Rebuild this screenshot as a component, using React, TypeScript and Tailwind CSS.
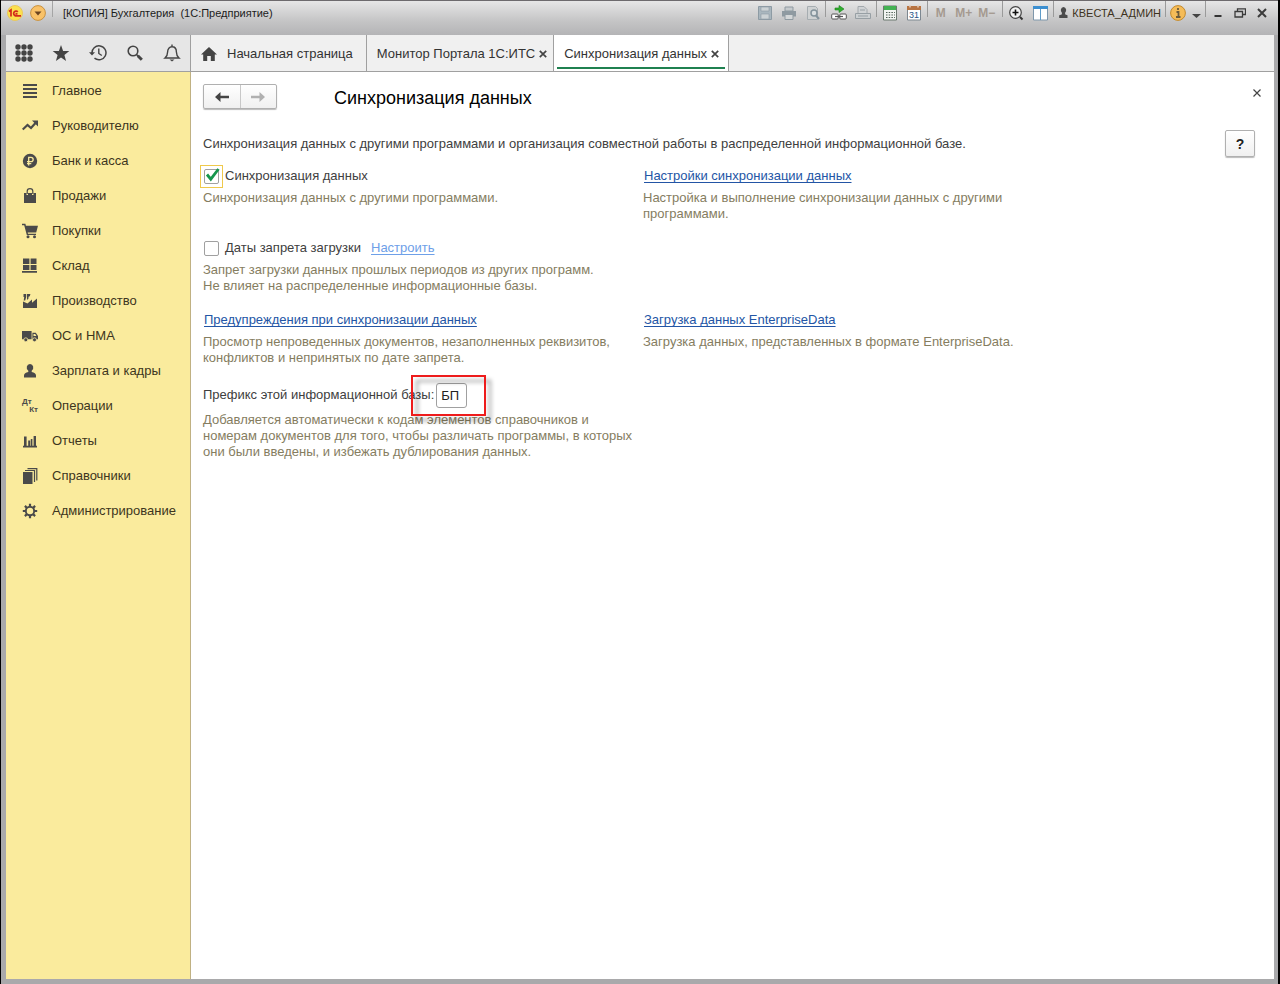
import React, { useState } from 'react';

type IconProps = { children: React.ReactNode; size?: number };

const Icon: React.FC<IconProps> = ({ children, size = 16 }) => (
  <svg width={size} height={size} viewBox="0 0 16 16" fill="currentColor" aria-hidden="true">
    {children}
  </svg>
);

const sections = [
  {
    title: 'Главное',
    icon: <path d="M1 1h14v2H1zM1 5h14v2H1zM1 9h14v2H1zM1 13h14v2H1z" />,
  },
  {
    title: 'Руководителю',
    icon: (
      <>
        <path d="M.7 11.500l4.800-4.500 3.500 3 4.500-5" fill="none" stroke="currentColor" strokeWidth="2.200" />
        <path d="M10 2.500h6v6z" />
      </>
    ),
  },
  {
    title: 'Банк и касса',
    icon: (
      <>
        <circle cx="8" cy="8" r="7.200" />
        <path d="M6.700 12.500V4.300h2.300a2.100 2.100 0 0 1 0 4.300H5M5 10.600h4.300" fill="none" stroke="#faeb9d" strokeWidth="1.300" />
      </>
    ),
  },
  {
    title: 'Продажи',
    icon: (
      <>
        <path d="M2 5h2.500v2h1.500V5h4v2h1.500V5H14v10H2z" />
        <path d="M5.200 6V3.300a2.800 2.600 0 0 1 5.600 0V6" fill="none" stroke="currentColor" strokeWidth="1.200" />
      </>
    ),
  },
  {
    title: 'Покупки',
    icon: (
      <>
        <path d="M0 .8h3.400l.5 2H16l-1.800 6.700H5.700l.3 1.200H14V12H4.800L2.200 2.300H0z" />
        <circle cx="6" cy="13.700" r="1.500" />
        <circle cx="12.500" cy="13.700" r="1.500" />
      </>
    ),
  },
  {
    title: 'Склад',
    icon: <path d="M1 .5h6.400v5.400H1zM8.600 .5H14.500v5.400H8.600zM1 6.900h6.400v5H1zM8.600 6.900H14.500v5H8.600zM0 13h15v1.800H0z" />,
  },
  {
    title: 'Производство',
    icon: <path d="M1 15V8.600l4.500 1.900L10 6.600v3.200L15 5.600V15zM1.500 1h2.700v3L3.200 7.500H1.700L2.200 4H1.500zM5 1h3.400L7.800 3.200 6.500 3.800V5.500L5 7z" />,
  },
  {
    title: 'ОС и НМА',
    icon: (
      <>
        <path d="M0 3h9.600v8.300H0zM10.400 4.800h3.400L16 8v3.300h-5.600z" />
        <path d="M11.500 6h1.700l1.200 2h-2.900z" fill="#faeb9d" />
        <circle cx="3.800" cy="11.800" r="2" stroke="#faeb9d" strokeWidth=".8" />
        <circle cx="12.500" cy="11.800" r="2" stroke="#faeb9d" strokeWidth=".8" />
      </>
    ),
  },
  {
    title: 'Зарплата и кадры',
    icon: <path d="M8 1a3.200 3.600 0 0 1 1.700 6.700v1.200c2.600.4 4.300 1.500 4.300 3.600V14.500H2v-2c0-2.100 1.700-3.200 4.300-3.600V7.700A3.200 3.600 0 0 1 8 1z" />,
  },
  { title: 'Операции', icon: null },
  {
    title: 'Отчеты',
    icon: <path d="M1 12.800h14v1.700H1zM2 3.500h2.600v10H2zM6.200 7.500h2v6h-2zM8.800 6h1.600v7H8.800zM11.600 3h2.400v10h-2.400z" />,
  },
  {
    title: 'Справочники',
    icon: (
      <>
        <path d="M1 4h9.500v12H1z" />
        <path d="M3 2.500h9.500V14M5.500.6h9.300V12.500" fill="none" stroke="currentColor" strokeWidth="1.200" />
      </>
    ),
  },
  {
    title: 'Администрирование',
    icon: (
      <>
        <circle cx="8" cy="8" r="4.200" fill="none" stroke="currentColor" strokeWidth="1.900" />
        <path d="M8 .8v3M8 12.200v3M.8 8h3M12.200 8h3M2.900 2.900L5 5M11 11l2.100 2.100M2.900 13.100L5 11M11 5l2.100-2.100" stroke="currentColor" strokeWidth="2.200" />
      </>
    ),
  },
];

const Separator = () => <span className="mx-px h-4 w-px shrink-0 self-start bg-[#9a9a9a]" />;

const BarButton: React.FC<{ label: string; className?: string; children: React.ReactNode }> = ({
  label,
  className = 'w-6',
  children,
}) => (
  <button type="button" aria-label={label} className={`flex h-6 shrink-0 items-center justify-center ${className}`}>
    {children}
  </button>
);

const TitleBar = () => (
  <header className="flex h-[35px] items-start border-t border-[#6d6a6d] bg-linear-to-b from-[#e6e6e6] via-[#c4c4c5] via-60% to-[#b4b4b6] pr-[5px]">
    <BarButton label="1С:Предприятие" className="ml-0.5 w-6">
      <svg width="16" height="16" viewBox="0 0 16 16" aria-hidden="true">
        <circle cx="8" cy="8" r="7.500" fill="#fbe04e" stroke="#e9c75c" />
        <path d="M2 6.500L4 5v6.500M10.800 6.800A2.400 2.400 0 1 0 8.500 10.800H14M10.500 8.800H8.500" fill="none" stroke="#d32a1c" strokeWidth="1.700" />
      </svg>
    </BarButton>
    <BarButton label="Меню" className="w-[22px]">
      <svg width="16" height="16" viewBox="0 0 16 16" aria-hidden="true">
        <circle cx="8" cy="8" r="7.400" fill="#f9c268" stroke="#c8913f" />
        <path d="M4.500 6.500h7L8 10.500z" fill="#6b4420" />
      </svg>
    </BarButton>
    <span className="ml-[3px] h-4 w-px bg-[#a5a5a5]" />
    <h1 className="ml-2.5 flex-1 truncate whitespace-pre text-[11px] leading-6 text-[#1c1c1c]">
      [КОПИЯ] Бухгалтерия  (1С:Предприятие)
    </h1>
    <BarButton label="Сохранить">
      <svg width="14" height="14" viewBox="0 0 14 14" aria-hidden="true">
        <path d="M.5.5h13v13H.5z" fill="#a9b6be" stroke="#8d9ba4" />
        <path d="M3 1h8v4H3zM3 8h8v5H3z" fill="#ccd2d5" stroke="#8d9ba4" strokeWidth=".6" />
      </svg>
    </BarButton>
    <BarButton label="Печать">
      <svg width="14" height="14" viewBox="0 0 14 14" aria-hidden="true">
        <path d="M3 1h8v4H3z" fill="#c6cbce" stroke="#8f9aa1" />
        <path d="M0 5h14v5.500H0z" fill="#8f9aa1" />
        <path d="M3 8.500h8v5H3z" fill="#d4d7d8" stroke="#8f9aa1" />
      </svg>
    </BarButton>
    <BarButton label="Просмотр" className="w-[23px]">
      <svg width="14" height="14" viewBox="0 0 14 14" aria-hidden="true">
        <path d="M1.500.5h8l2 2v11h-10z" fill="#cfd2d3" stroke="#a6adb1" />
        <circle cx="8" cy="7" r="3" fill="#d9dee0" stroke="#84939c" strokeWidth="1.500" />
        <path d="M10 9.500l3 3.500" stroke="#84939c" strokeWidth="2" />
      </svg>
    </BarButton>
    <Separator />
    <BarButton label="Получить ссылку">
      <svg width="16" height="16" viewBox="0 0 16 16" aria-hidden="true">
        <path d="M4 3h4V.5L13 4 8 7.500V5H4z" fill="#2fae2f" stroke="#188018" strokeWidth=".6" />
        <rect x=".7" y="9" width="6.500" height="5" rx="1" fill="#fff" stroke="#555" />
        <rect x="8.800" y="9" width="6.500" height="5" rx="1" fill="#fff" stroke="#555" />
        <path d="M4 11.500h8" stroke="#555" strokeWidth="1.200" />
      </svg>
    </BarButton>
    <BarButton label="Перейти по ссылке">
      <svg width="16" height="14" viewBox="0 0 16 14" aria-hidden="true">
        <path d="M3 .5h6l3 3V8H3z" fill="#d0d3d5" stroke="#a2a8ac" />
        <path d="M.5 7.500h15v5H.5z" fill="#ccd0d2" stroke="#979fa4" />
        <path d="M3 10h10M5 4h5" stroke="#979fa4" />
      </svg>
    </BarButton>
    <Separator />
    <BarButton label="Калькулятор">
      <svg width="14" height="16" viewBox="0 0 14 16" aria-hidden="true">
        <path d="M.5 1h13v14H.5z" fill="#f2f5f2" stroke="#6b786f" />
        <path d="M1 1h12v4H1z" fill="#43b253" />
        <path d="M3 7.500h9M3 10h9M3 12.500h9" stroke="#4f6156" strokeWidth="1.200" strokeDasharray="1.500 1.200" />
      </svg>
    </BarButton>
    <BarButton label="Календарь">
      <svg width="14" height="16" viewBox="0 0 14 16" aria-hidden="true">
        <path d="M.5 2h13v13H.5z" fill="#fff" stroke="#7d8790" />
        <path d="M0 1h14v4H0z" fill="#b87442" />
        <path d="M3 0v2.500M11 0v2.500" stroke="#e6d0bd" strokeWidth="1.500" />
        <text x="7" y="13" textAnchor="middle" fontSize="9" fill="#2c5486">31</text>
      </svg>
    </BarButton>
    <Separator />
    <BarButton label="M" className="w-[23px] text-xs font-bold text-[#a59a90]">M</BarButton>
    <BarButton label="M+" className="w-[23px] text-xs font-bold text-[#a59a90]">M+</BarButton>
    <BarButton label="M-" className="mr-[3px] w-[23px] text-xs font-bold text-[#a59a90]">M−</BarButton>
    <Separator />
    <BarButton label="Масштаб">
      <svg width="16" height="16" viewBox="0 0 16 16" aria-hidden="true">
        <circle cx="7.500" cy="7.500" r="5.800" fill="#f3f3f3" stroke="#444" strokeWidth="1.200" />
        <path d="M7.500 4.500v6M4.500 7.500h6" stroke="#111" strokeWidth="1.600" />
        <path d="M12 12l2.500 2.500" stroke="#333" strokeWidth="2" />
      </svg>
    </BarButton>
    <BarButton label="Панели">
      <svg width="15" height="15" viewBox="0 0 15 15" aria-hidden="true">
        <path d="M.5.500h14v13.500H.5z" fill="#fff" stroke="#7f97ab" />
        <path d="M0 0h15v3H0z" fill="#3c8fd0" />
        <path d="M7.500 3v11" stroke="#5d9bc9" />
      </svg>
    </BarButton>
    <Separator />
    <button type="button" className="flex h-6 shrink-0 items-center gap-[3px] px-[3px] text-[11px] text-[#3d3220]">
      <svg width="11" height="12" viewBox="0 0 11 12" fill="#4b4b4b" aria-hidden="true">
        <path d="M5.500 0a2.800 3.300 0 0 1 1.500 6l.3 1.500 2.200.8V11H1.200V8.300l2.500-.8L4 6A2.800 3.300 0 0 1 5.500 0z" />
      </svg>
      КВЕСТА_АДМИН
    </button>
    <Separator />
    <BarButton label="О программе" className="w-[22px]">
      <svg width="16" height="16" viewBox="0 0 16 16" aria-hidden="true">
        <circle cx="8" cy="8" r="7.400" fill="#f5bc58" stroke="#c38a2c" />
        <path d="M8 3v2M6.500 7h2v5M6 12h4.500" stroke="#6c5b3c" strokeWidth="1.800" fill="none" />
      </svg>
    </BarButton>
    <BarButton label="Ещё" className="w-[15px]">
      <svg width="9" height="10" viewBox="0 0 9 10" fill="#444" aria-hidden="true">
        <path d="M0 6h9L4.500 10z" />
      </svg>
    </BarButton>
    <Separator />
    <BarButton label="Свернуть" className="w-[22px]">
      <svg width="12" height="12" viewBox="0 0 12 12" aria-hidden="true">
        <path d="M2.500 9h7" stroke="#333" strokeWidth="2" />
      </svg>
    </BarButton>
    <BarButton label="Развернуть" className="w-[22px]">
      <svg width="12" height="12" viewBox="0 0 12 12" fill="none" stroke="#3b3b3b" aria-hidden="true">
        <path d="M3.500 4V1.800h8V7.500H9" strokeWidth="1.300" />
        <path d="M1 4.500h7.500v5.500H1z" strokeWidth="1.300" />
      </svg>
    </BarButton>
    <BarButton label="Закрыть" className="w-[22px]">
      <svg width="12" height="12" viewBox="0 0 12 12" aria-hidden="true">
        <path d="M2 2l8 8M10 2l-8 8" stroke="#3b3b3b" strokeWidth="2" />
      </svg>
    </BarButton>
  </header>
);

const TabClose: React.FC<{ label: string }> = ({ label }) => (
  <button type="button" aria-label={label} className="flex size-2 items-center justify-center text-[#444]">
    <svg width="8" height="8" viewBox="0 0 8 8" aria-hidden="true">
      <path d="M.8.8l6.400 6.400M7.200.8L.8 7.200" stroke="currentColor" strokeWidth="1.700" />
    </svg>
  </button>
);

const Toolbar = () => (
  <div className="flex h-[37px] border-b border-[#a0a0a0] bg-[#f0f0f0] text-[#444]">
    <div className="flex w-[185px] shrink-0 border-r border-[#a0a0a0] bg-[#e6e6e6] *:flex *:flex-1 *:items-center *:justify-center">
      <button type="button" aria-label="Меню функций">
        <svg width="18" height="18" viewBox="0 0 18 18" fill="currentColor" aria-hidden="true">
          {[3, 9, 15].map((y) => [3, 9, 15].map((x) => <circle key={`${x}-${y}`} cx={x} cy={y} r="2.700" />))}
        </svg>
      </button>
      <button type="button" aria-label="Избранное">
        <svg width="18" height="18" viewBox="0 0 18 18" fill="currentColor" aria-hidden="true">
          <path d="M9 1l2.100 5.900 6.200.2-4.900 3.800 1.700 6L9 13.400 3.900 16.900l1.700-6L.7 7.100l6.200-.2z" />
        </svg>
      </button>
      <button type="button" aria-label="История">
        <svg width="18" height="18" viewBox="0 0 18 18" fill="none" stroke="currentColor" aria-hidden="true">
          <path d="M3 9.500A7 7 0 1 1 5.500 14.200" strokeWidth="1.500" />
          <path d="M9.800 4.500v5l3 2" strokeWidth="1.400" />
          <path d="M0 8.300h6L3 11.600z" fill="currentColor" stroke="none" />
        </svg>
      </button>
      <button type="button" aria-label="Поиск">
        <svg width="18" height="18" viewBox="0 0 18 18" fill="none" stroke="currentColor" aria-hidden="true">
          <circle cx="7" cy="7" r="4.800" strokeWidth="1.600" />
          <path d="M10.500 10.500l2 2" strokeWidth="1.600" />
          <path d="M11.800 11.800l4 4" strokeWidth="3" />
        </svg>
      </button>
      <button type="button" aria-label="Оповещения">
        <svg width="18" height="18" viewBox="0 0 18 18" fill="none" stroke="currentColor" aria-hidden="true">
          <path d="M9 .5v2M2 14c2-1.700 2.600-3 2.600-6C4.600 4.800 6.500 2.800 9 2.800s4.400 2 4.400 5.200c0 3 .6 4.300 2.600 6z" strokeWidth="1.400" />
          <path d="M6.500 15.500h5L9 17.500z" fill="currentColor" stroke="none" />
        </svg>
      </button>
    </div>
    <nav className="flex text-[13px] text-[#333]">
      <a href="#home" className="flex items-center gap-2.5 border-r border-[#a0a0a0] pt-0.5 pr-[13px] pl-2.5">
        <svg width="16" height="14" viewBox="0 0 16 14" fill="#444" aria-hidden="true">
          <path d="M8 0l8 7.500h-2.200V14H9.800V9H6.200v5h-4V7.500H0z" />
        </svg>
        Начальная страница
      </a>
      <div className="flex items-center gap-1 border-r border-[#a0a0a0] pt-0.5 pr-1.5 pl-2.5">
        <a href="#portal">Монитор Портала 1С:ИТС</a>
        <TabClose label="Закрыть монитор портала" />
      </div>
      <div className="flex border-r border-[#a0a0a0] bg-white px-[3px] pb-0.5">
        <div className="flex items-center gap-1 border-b-2 border-[#1f8150] pt-1.5 pr-1.5 pl-[7px]">
          <a href="#sync" aria-current="page">Синхронизация данных</a>
          <TabClose label="Закрыть синхронизацию данных" />
        </div>
      </div>
    </nav>
  </div>
);

const Sidebar = () => (
  <nav className="w-[185px] shrink-0 border-r border-[#c0b183] bg-[#faeb9d] pt-px text-[#3d3520]">
    {sections.map((section) => (
      <a key={section.title} href="#section" className="flex h-[35px] items-center gap-3.5 pl-4 text-[13px]">
        <span className="w-4 text-[#4a4a4a]">
          {section.icon ? (
            <Icon>{section.icon}</Icon>
          ) : (
            <span className="flex flex-col text-[8px] leading-2 font-bold">
              <span>Дт</span>
              <span className="self-end">Кт</span>
            </span>
          )}
        </span>
        {section.title}
      </a>
    ))}
  </nav>
);

type CheckProps = { id: string; label: string; checked: boolean; onChange: (value: boolean) => void };

const Check: React.FC<CheckProps> = ({ id, label, checked, onChange }) => (
  <>
    <span
      className={`relative -ml-[3px] flex size-[23px] items-center justify-center border ${
        checked ? 'border-[#efc94c]' : 'border-transparent'
      }`}
    >
      <input
        id={id}
        type="checkbox"
        checked={checked}
        onChange={(e) => onChange(e.target.checked)}
        className="size-[15px] appearance-none rounded-xs border border-[#a0a0a0] bg-white"
      />
      {checked && (
        <svg className="pointer-events-none absolute inset-0" width="21" height="21" viewBox="0 0 21 21" aria-hidden="true">
          <path d="M6 8.500l3.800 4.700L17.500 3" fill="none" stroke="#16964d" strokeWidth="2.800" />
        </svg>
      )}
    </span>
    <label htmlFor={id} className="ml-0.5">
      {label}
    </label>
  </>
);

const Hint: React.FC<{ children: React.ReactNode }> = ({ children }) => (
  <p className="mt-0.5 max-w-[430px] leading-4 text-[#857d5f]">{children}</p>
);

const link = 'ml-px text-[#2355a5] underline underline-offset-2';

export default function App() {
  const [sync, setSync] = useState(true);
  const [dates, setDates] = useState(false);
  const [prefix, setPrefix] = useState('БП');

  return (
    <div className="flex min-h-screen flex-col border-r-2 border-l border-black bg-[#a9a9ab] font-['Liberation_Sans',Arial,sans-serif]">
      <TitleBar />
      <div className="mr-1 mb-[5px] ml-[5px] flex flex-1 flex-col">
        <Toolbar />
        <div className="flex flex-1">
          <Sidebar />
          <main className="flex-1 bg-white px-3 pt-3 text-[13px] text-[#404040]">
            <div className="flex items-start">
              <div className="flex h-[25px] w-[74px] rounded-xs border border-[#b0b0b0] bg-linear-to-b from-white to-[#f0f0f0] shadow-[0_1px_1px_#bbb] *:flex *:flex-1 *:items-center *:justify-center">
                <button type="button" aria-label="Назад" className="border-r border-[#c8c8c8] text-[#444]">
                  <svg width="14" height="10" viewBox="0 0 14 10" aria-hidden="true">
                    <path d="M0 5l5.500-5v3.800H14v2.400H5.500V10z" fill="currentColor" />
                  </svg>
                </button>
                <button type="button" aria-label="Вперед" className="text-[#b0b0b0]">
                  <svg width="14" height="10" viewBox="0 0 14 10" aria-hidden="true">
                    <path d="M14 5L8.500 0v3.800H0v2.400h8.500V10z" fill="currentColor" />
                  </svg>
                </button>
              </div>
              <h2 className="ml-[57px] flex-1 text-lg leading-7 text-black">Синхронизация данных</h2>
              <button type="button" aria-label="Закрыть" className="mt-1 flex size-2.5 items-center justify-center">
                <svg width="8" height="8" viewBox="0 0 8 8" aria-hidden="true">
                  <path d="M.5.5l7 7M7.500.5l-7 7" stroke="#444" strokeWidth="1.200" />
                </svg>
              </button>
            </div>

            <div className="mt-[18px] mr-[7px] flex items-center justify-between">
              <p>
                Синхронизация данных с другими программами и организация совместной работы в распределенной информационной
                базе.
              </p>
              <button
                type="button"
                className="h-[27px] w-[30px] shrink-0 rounded-xs border border-[#b0b0b0] bg-linear-to-b from-white to-[#f0f0f0] text-sm font-bold text-[#222] shadow-[0_1px_1px_#bbb]"
              >
                ?
              </button>
            </div>

            <div className="mt-[7px] grid grid-cols-[440px_1fr] gap-y-3.5">
              <section>
                <div className="flex h-6 items-center">
                  <Check id="sync" label="Синхронизация данных" checked={sync} onChange={setSync} />
                </div>
                <Hint>Синхронизация данных с другими программами.</Hint>
              </section>
              <section>
                <div className="flex h-6 items-center">
                  <a href="#settings" className={link}>Настройки синхронизации данных</a>
                </div>
                <Hint>Настройка и выполнение синхронизации данных с другими программами.</Hint>
              </section>

              <section className="col-span-2">
                <div className="flex h-6 items-center">
                  <Check id="dates" label="Даты запрета загрузки" checked={dates} onChange={setDates} />
                  <a href="#dates" className="ml-2.5 text-[#6ea0e8] underline underline-offset-2">Настроить</a>
                </div>
                <Hint>
                  Запрет загрузки данных прошлых периодов из других программ.
                  <br />
                  Не влияет на распределенные информационные базы.
                </Hint>
              </section>

              <section>
                <div className="flex h-6 items-center">
                  <a href="#warnings" className={link}>Предупреждения при синхронизации данных</a>
                </div>
                <Hint>
                  Просмотр непроведенных документов, незаполненных реквизитов, конфликтов и непринятых по дате запрета.
                </Hint>
              </section>
              <section>
                <div className="flex h-6 items-center">
                  <a href="#import" className={link}>Загрузка данных EnterpriseData</a>
                </div>
                <Hint>Загрузка данных, представленных в формате EnterpriseData.</Hint>
              </section>

              <section className="col-span-2">
                <div className="flex h-[30px] items-center">
                  <label htmlFor="prefix">Префикс этой информационной базы:</label>
                  <span className="relative ml-0.5 flex">
                    <input
                      id="prefix"
                      value={prefix}
                      onChange={(e) => setPrefix(e.target.value)}
                      className="h-[25px] w-[31px] rounded-[3px] border border-[#a0a0a0] bg-white px-1 text-[13px] text-[#222]"
                    />
                    <span className="pointer-events-none absolute -top-2 -right-[19px] -bottom-2 -left-[25px] border-2 border-[#ee1c1c] drop-shadow-[5px_5px_2px_rgba(0,0,0,0.4)]" />
                  </span>
                </div>
                <Hint>
                  Добавляется автоматически к кодам элементов справочников и номерам документов для того, чтобы различать
                  программы, в которых они были введены, и избежать дублирования данных.
                </Hint>
              </section>
            </div>
          </main>
        </div>
      </div>
    </div>
  );
}
